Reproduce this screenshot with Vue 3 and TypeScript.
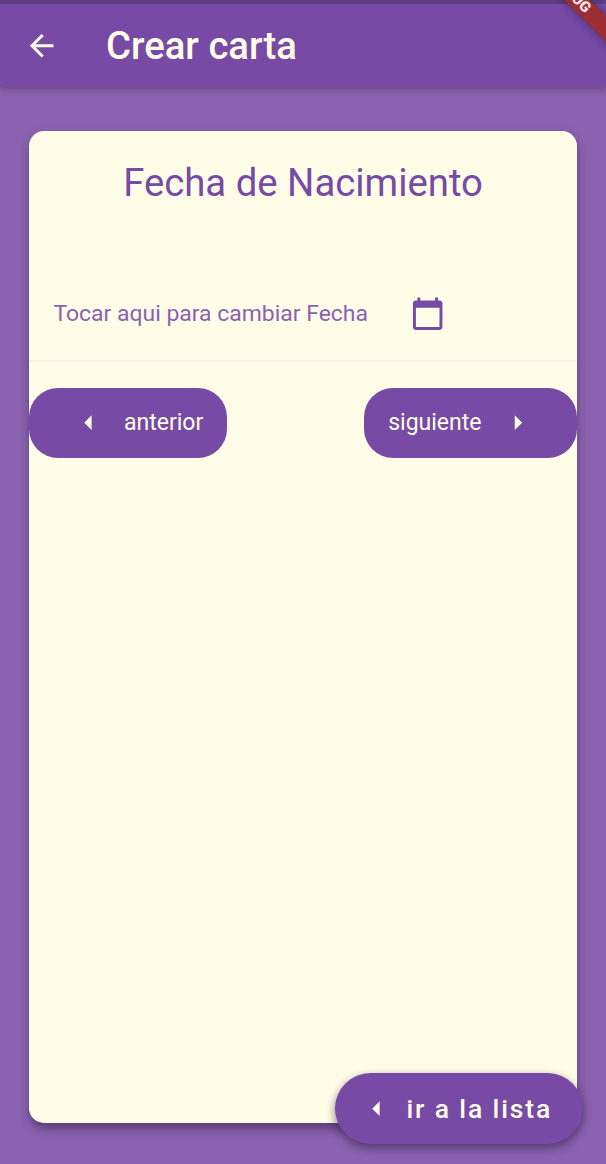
<script setup lang="ts">
const title: string = 'Crear carta'
const heading: string = 'Fecha de Nacimiento'
const arrowLeft: string = 'M14 7l-5 5 5 5V7z'
const arrowRight: string = 'M10 17l5-5-5-5v10z'
</script>

<template>
  <div class="screen">
    <header class="app-bar">
      <button class="back" aria-label="Volver">
        <svg class="icon" viewBox="0 0 24 24"><path d="M20 11H7.83l5.59-5.59L12 4l-8 8 8 8 1.41-1.41L7.83 13H20v-2z" /></svg>
      </button>
      <h1>{{ title }}</h1>
    </header>
    <div class="banner"><span>DEBUG</span></div>

    <main class="card">
      <h2>{{ heading }}</h2>
      <div class="date-row">
        <span class="date-label">Tocar aqui para cambiar Fecha</span>
        <svg class="icon" viewBox="0 0 24 24"><path d="M20 3h-1V1h-2v2H7V1H5v2H4c-1.1 0-2 .9-2 2v16c0 1.1.9 2 2 2h16c1.1 0 2-.9 2-2V5c0-1.1-.9-2-2-2zm0 18H4V8h16v13z" /></svg>
      </div>
      <div class="actions">
        <button class="pill previous">
          <svg class="icon" viewBox="0 0 24 24"><path :d="arrowLeft" /></svg>
          <span>anterior</span>
        </button>
        <button class="pill next">
          <span>siguiente</span>
          <svg class="icon" viewBox="0 0 24 24"><path :d="arrowRight" /></svg>
        </button>
      </div>
    </main>

    <button class="fab">
      <svg class="icon" viewBox="0 0 24 24"><path :d="arrowLeft" /></svg>
      <span>ir a la lista</span>
    </button>
  </div>
</template>

<style>
body {
  margin: 0;
}
</style>

<style scoped>
.screen {
  position: relative;
  box-sizing: border-box;
  width: 606px;
  height: 1164px;
  overflow: hidden;
  background: #8b62b0;
  font-family: Roboto, sans-serif;
}
button {
  box-sizing: border-box;
  border: 0;
  margin: 0;
  padding: 0;
  background: none;
  color: #fffde7;
  font-family: inherit;
}
span,
h1,
h2 {
  white-space: nowrap;
}
.icon {
  display: block;
  flex: none;
  width: 35.4px;
  height: 35.4px;
  fill: currentColor;
}
.app-bar {
  box-sizing: border-box;
  display: flex;
  align-items: center;
  height: 87px;
  padding-left: 23.6px;
  border-top: 4px solid #5f3d80;
  background: #764aa5;
  color: #fffde7;
  box-shadow: 0 3px 6px rgba(70, 50, 80, 0.45);
}
h1 {
  margin: 0 0 0 47px;
  font-size: 38.3px;
  line-height: 46px;
  font-weight: 500;
}
.banner {
  position: absolute;
  left: 501px;
  top: -15.4px;
  width: 140px;
  height: 17.7px;
  transform: rotate(45deg);
  background: #9b2e34;
  box-shadow: 0 0 8px rgba(0, 0, 0, 0.4);
  color: #f3e6e6;
  font-size: 15px;
  line-height: 17.7px;
  font-weight: 900;
  text-align: center;
}
.card {
  box-sizing: border-box;
  width: 547.3px;
  height: 992px;
  margin: 44px 0 0 29.4px;
  padding-top: 29px;
  border-radius: 15px;
  background: #fffde7;
  box-shadow: 0 8px 10px -2px rgba(60, 40, 75, 0.5), 0 2px 8px rgba(60, 40, 75, 0.25);
}
h2 {
  margin: 0;
  font-size: 38.3px;
  line-height: 46px;
  font-weight: 400;
  color: #764aa5;
  text-align: center;
}
.date-row {
  box-sizing: border-box;
  display: flex;
  align-items: center;
  height: 95px;
  margin-top: 61px;
  padding: 1px 0 0 24px;
  border-bottom: 2px solid #f4f2de;
  color: #764aa5;
}
.date-label {
  width: 356.6px;
  padding-bottom: 1px;
  font-size: 22.95px;
  line-height: 28px;
  color: #8b62b0;
}
.actions {
  display: flex;
  justify-content: space-between;
  margin-top: 25.5px;
}
.pill {
  display: flex;
  align-items: center;
  height: 70.5px;
  border-radius: 29px;
  background: #764aa5;
  font-size: 23px;
}
.previous {
  width: 197.5px;
  padding-left: 41.6px;
  gap: 17.6px;
}
.next {
  width: 212.5px;
  padding-left: 24px;
  gap: 18.8px;
}
.fab {
  position: absolute;
  left: 335px;
  top: 1073px;
  display: flex;
  align-items: center;
  width: 248px;
  height: 71px;
  padding-left: 23.8px;
  gap: 12.2px;
  border-radius: 36px;
  background: #764aa5;
  box-shadow: 0 5px 8px rgba(50, 35, 65, 0.45), 0 2px 10px rgba(50, 35, 65, 0.2);
  font-size: 26.5px;
  font-weight: 500;
  letter-spacing: 1.87px;
}
</style>
